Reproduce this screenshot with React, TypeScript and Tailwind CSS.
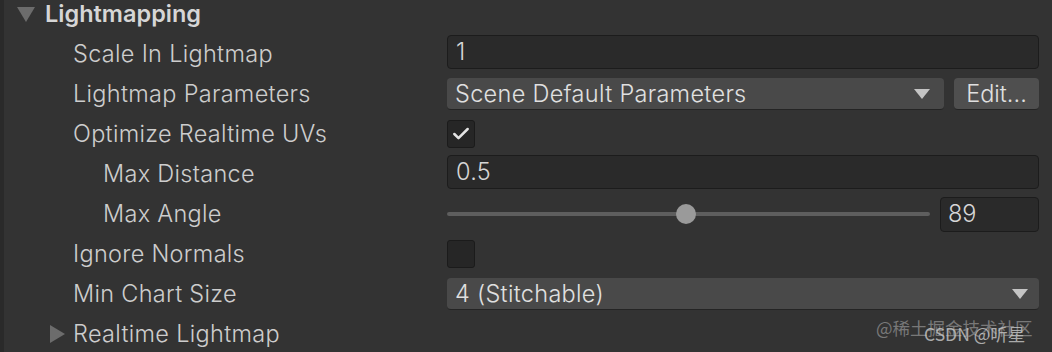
import { Check } from 'lucide-react';

const font = { fontFamily: 'Inter, "Noto Sans", sans-serif' };

function Row({ label, indent = 73, children }: { label: string; indent?: number; children?: React.ReactNode }) {
  return (
    <div className="flex h-10 items-center">
      <div className="w-[447px] shrink-0 text-[23.5px] font-light tracking-[0.3px] text-[#cdcdcd] whitespace-nowrap" style={{ paddingLeft: indent }}>
        {label}
      </div>
      <div className="flex flex-1 items-center pr-[13px]">{children}</div>
    </div>
  );
}

function TextField({ value }: { value: string }) {
  return (
    <div className="flex h-[34px] flex-1 -translate-y-[2px] items-center rounded-[4px] border border-[#1c1c1c] bg-[#2a2a2a] px-[8px] text-[23.5px] font-light tracking-[0.3px] text-[#d6d6d6]">
      {value}
    </div>
  );
}

function Arrow() {
  return (
    <svg width="16" height="10" viewBox="0 0 16 10" className="shrink-0">
      <polygon points="0,0 16,0 8,10" fill="#c4c4c4" />
    </svg>
  );
}

function Checkbox({ checked }: { checked?: boolean }) {
  return (
    <div className="flex h-[28px] w-[28px] items-center justify-center rounded-[3px] border border-[#1b1b1b] bg-[#262626]">
      {checked && <Check className="h-[20px] w-[20px] text-[#e4e4e4]" strokeWidth={3} />}
    </div>
  );
}

export default function App() {
  return (
    <div className="relative h-[352px] w-[1052px] overflow-hidden bg-[#333333]" style={font}>
      <div className="absolute left-0 top-0 h-full w-[4px] bg-[#2a2a2a]" />
      <div className="-mt-[6px]">
        {/* Header */}
        <div className="flex h-10 items-center">
          <svg width="18" height="15" viewBox="0 0 18 15" className="ml-[17px] mr-[10px]">
            <polygon points="0,0 18,0 9,15" fill="#6c6c6c" />
          </svg>
          <span className="text-[23.5px] font-semibold text-[#d6d6d6]">Lightmapping</span>
        </div>

        <Row label="Scale In Lightmap">
          <TextField value="1" />
        </Row>

        <Row label="Lightmap Parameters">
          <div className="flex h-[32px] flex-1 items-center rounded-[4px] border-b border-[#242424] bg-[#494949] pl-[8px] pr-[14px] text-[23.5px] font-light tracking-[0.3px] text-[#e0e0e0]">
            <span className="flex-1">Scene Default Parameters</span>
            <Arrow />
          </div>
          <div className="ml-[10px] flex h-[32px] w-[85px] items-center justify-center rounded-[4px] border-b border-[#242424] bg-[#4f4f4f] text-[23.5px] font-light text-[#e0e0e0]">
            Edit...
          </div>
        </Row>

        <Row label="Optimize Realtime UVs">
          <Checkbox checked />
        </Row>

        <Row label="Max Distance" indent={103}>
          <TextField value="0.5" />
        </Row>

        <Row label="Max Angle" indent={103}>
          <div className="relative flex h-[20px] flex-1 items-center">
            <div className="h-[4px] w-full rounded-full bg-[#5e5e5e]" />
            <div className="absolute left-[229px] top-0 h-[20px] w-[20px] rounded-full bg-[#9a9a9a]" />
          </div>
          <div className="ml-[10px] flex h-[35px] w-[99px] items-center rounded-[4px] border border-[#1c1c1c] bg-[#2a2a2a] px-[7px] text-[23.5px] font-light text-[#d6d6d6]">
            89
          </div>
        </Row>

        <Row label="Ignore Normals">
          <Checkbox />
        </Row>

        <Row label="Min Chart Size">
          <div className="flex h-[32px] flex-1 items-center rounded-[4px] border-b border-[#242424] bg-[#494949] pl-[8px] pr-[11px] text-[23.5px] font-light tracking-[0.3px] text-[#e0e0e0]">
            <span className="flex-1">4 (Stitchable)</span>
            <Arrow />
          </div>
        </Row>

        <div className="flex h-10 items-center">
          <svg width="15" height="18" viewBox="0 0 15 18" className="ml-[50px] mr-[8px]">
            <polygon points="0,0 15,9 0,18" fill="#6c6c6c" />
          </svg>
          <span className="text-[23.5px] font-light tracking-[0.3px] text-[#cdcdcd]">Realtime Lightmap</span>
        </div>
      </div>

      {/* watermark */}
      <div
        className="absolute left-[876px] top-[315px] text-[17.5px] text-[#8a8a8a] opacity-80"
        style={{ fontFamily: '"Noto Sans CJK SC", sans-serif' }}
      >
        @稀土掘金技术社区
      </div>
      <div
        className="absolute left-[924px] top-[321px] text-[17.5px] text-[#c8c8c8] opacity-80"
        style={{ fontFamily: '"Noto Sans CJK SC", sans-serif' }}
      >
        CSDN @听星
      </div>
    </div>
  );
}
